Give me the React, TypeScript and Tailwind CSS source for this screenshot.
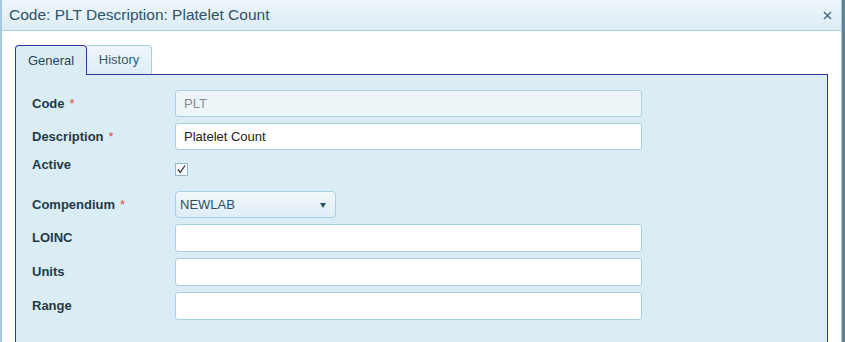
import React from "react";

const Label = ({ text, req }: { text: string; req?: boolean }) => (
  <div className="w-[143px] shrink-0 text-[13px] font-bold text-[#1f3b4a] leading-4">
    {text}
    {req && <span className="text-[#e0503e] font-normal ml-[5px]">*</span>}
  </div>
);

const TextInput = ({ value, disabled, h }: { value?: string; disabled?: boolean; h: string }) => (
  <div
    className={`w-[467px] ${h} rounded-[3px] border border-[#a9cfe3] flex items-center pl-[8px] text-[13px] ${
      disabled ? "bg-[#eef5f9] text-[#7d8e98]" : "bg-white text-[#222]"
    }`}
  >
    {value}
  </div>
);

export default function App() {
  return (
    <div className="w-[845px] h-[342px] bg-[#5f8290] overflow-hidden font-['Liberation_Sans',Arial,sans-serif]">
      <div className="w-[842px] h-full bg-white border-l-2 border-r border-[#a6c9e2] flex flex-col">
        <div className="h-[31px] shrink-0 bg-gradient-to-b from-[#eef6fb] to-[#dcecf5] border-b border-[#a9cfe2] flex items-center justify-between pl-[7px] pr-[9px]">
          <span className="text-[15.5px] text-[#2f5367]">Code: PLT Description: Platelet Count</span>
          <svg width="9" height="9" viewBox="0 0 9 9" className="mt-[1px]">
            <path d="M1 1L8 8M8 1L1 8" stroke="#4e6f80" strokeWidth="1.6" />
          </svg>
        </div>
        <div className="flex-1 px-[13px] pt-[14px] flex flex-col">
          <div className="flex items-end h-[29px] relative z-10">
            <div className="h-[30px] -mb-px w-[72px] border border-b-0 border-[#3434a0] rounded-t-[4px] bg-[#daecf4] flex items-center justify-center text-[13px] text-[#2b4553]">
              General
            </div>
            <div className="h-[29px] w-[65px] border border-l-0 border-b-0 border-[#a9cfe3] rounded-tr-[4px] bg-gradient-to-b from-[#eef6fb] to-[#deedf6] flex items-center justify-center text-[13px] text-[#3b5a6a]">
              History
            </div>
          </div>
          <div className="flex-1 border border-b-0 border-[#3434a0] bg-[#daecf4] pl-[16px] pt-[15px] flex flex-col gap-[6px]">
            <div className="flex items-center">
              <Label text="Code" req />
              <TextInput value="PLT" disabled h="h-[27px]" />
            </div>
            <div className="flex items-center">
              <Label text="Description" req />
              <TextInput value="Platelet Count" h="h-[27px]" />
            </div>
            <div className="flex items-start h-[29px] pt-[1px]">
              <Label text="Active" />
              <div className="mt-[6px] w-[13px] h-[13px] border border-[#93b8cb] bg-[#f3f8fb] flex items-center justify-center">
                <svg width="11" height="11" viewBox="0 0 11 11">
                  <path d="M2 5.5L4.3 8.5L9 1.5" stroke="#333" strokeWidth="1.3" fill="none" />
                </svg>
              </div>
            </div>
            <div className="flex items-center">
              <Label text="Compendium" req />
              <div className="w-[161px] h-[27px] rounded-[4px] border border-[#a9cfe3] bg-gradient-to-b from-[#f2f8fb] to-[#deedf5] flex items-center justify-between pl-[4px] pr-[9px] text-[13px] text-[#2e4f5f]">
                <span>NEWLAB</span>
                <svg width="6" height="5" viewBox="0 0 6 5" className="mt-[2px]">
                  <path d="M0 0H6L3 5Z" fill="#2e4f5f" />
                </svg>
              </div>
            </div>
            <div className="flex items-center">
              <Label text="LOINC" />
              <TextInput h="h-[28px]" />
            </div>
            <div className="flex items-center">
              <Label text="Units" />
              <TextInput h="h-[28px]" />
            </div>
            <div className="flex items-center">
              <Label text="Range" />
              <TextInput h="h-[28px]" />
            </div>
          </div>
        </div>
      </div>
    </div>
  );
}
